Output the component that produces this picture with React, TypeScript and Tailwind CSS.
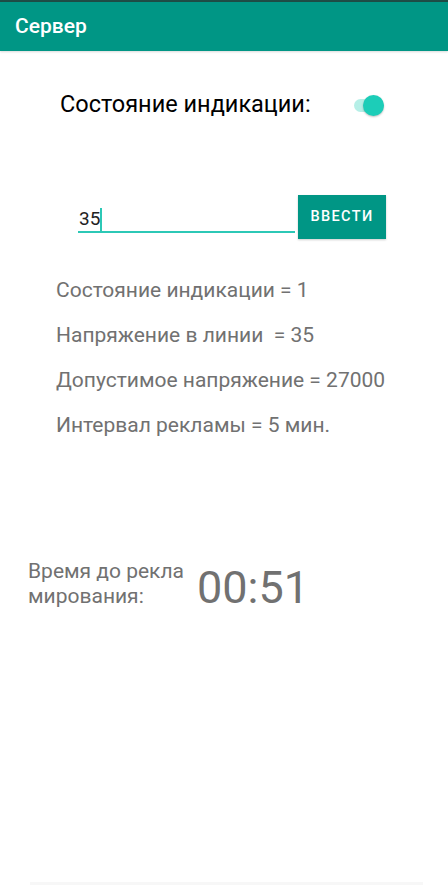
import React from "react";

export default function App() {
  const font = { fontFamily: "Roboto, 'Noto Sans', sans-serif" };
  return (
    <div className="w-[448px] h-[885px] bg-white flex flex-col relative overflow-hidden" style={font}>
      <div className="h-[2px] bg-[#1e4d46]" />
      <div className="h-[49px] bg-[#009685] flex items-center pl-[15px] shadow-[0_1px_2px_rgba(0,0,0,0.15)]">
        <span className="text-white text-[21px] font-medium leading-none">Сервер</span>
      </div>

      <div className="flex items-center mt-[36px] h-[36px]">
        <span className="ml-[60px] text-[23.5px] text-black leading-none">Состояние индикации:</span>
        <div className="ml-[43px] relative w-[34px] h-[22px] flex items-center">
          <div className="absolute left-[0px] w-[30px] h-[13px] rounded-full bg-[#b6efe7]" />
          <div className="absolute left-[9px] w-[21px] h-[21px] rounded-full bg-[#1ccdb8] shadow-[0_1px_2px_rgba(0,0,0,0.25)]" />
        </div>
      </div>

      <div className="flex items-start mt-[72px]">
        <div className="ml-[78px] w-[217px] h-[38px] flex items-end border-b-2 border-[#2cc8b6] pb-[3px]">
          <span className="ml-[1px] text-[19px] text-[#222] leading-none">35</span>
          <span className="w-[2px] h-[23px] bg-[#2cc8b6] mb-[-3px]" />
        </div>
        <button className="ml-[3px] w-[88px] h-[44px] bg-[#009685] text-white text-[14.5px] font-medium tracking-[1.4px] flex items-center justify-center shadow-[0_1px_2px_rgba(0,0,0,0.2)]">
          ВВЕСТИ
        </button>
      </div>

      <div className="flex flex-col ml-[56px] mt-[39px] text-[21px] text-[#717171] leading-[24px] gap-[21px]">
        <span>Состояние индикации = 1</span>
        <span className="whitespace-pre">Напряжение в линии  = 35</span>
        <span>Допустимое напряжение = 27000</span>
        <span>Интервал рекламы = 5 мин.</span>
      </div>

      <div className="flex items-center mt-[120px] ml-[28px]">
        <div className="text-[21px] text-[#717171] leading-[25px] w-[160px]">
          <div>Время до рекла</div>
          <div>мирования:</div>
        </div>
        <span className="ml-[9px] mt-[8px] text-[45px] text-[#717171] leading-none">00:51</span>
      </div>

      <div className="absolute bottom-0 left-[30px] right-[25px] h-[3px] bg-[#f7f7f7]" />
    </div>
  );
}
